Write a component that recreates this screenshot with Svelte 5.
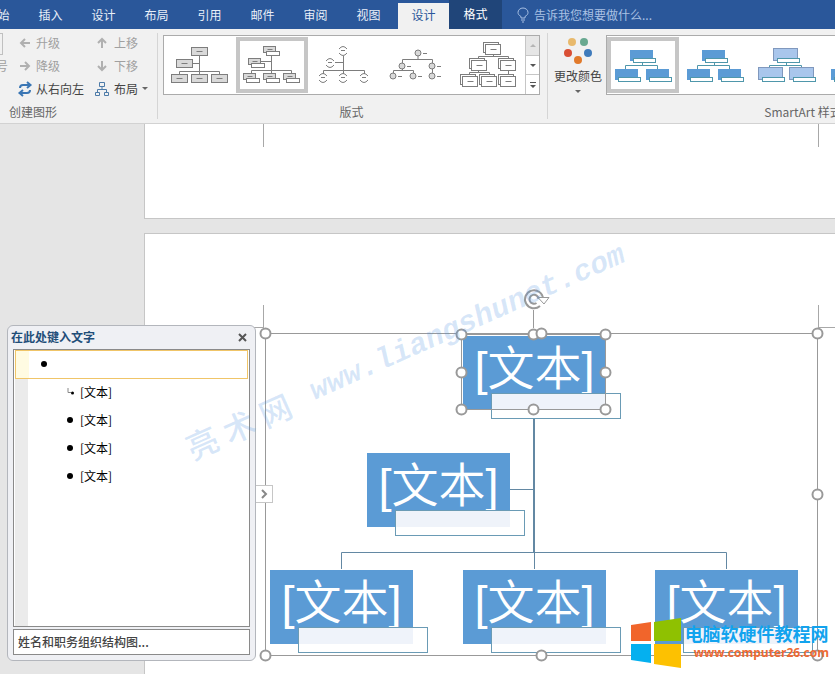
<script>
	const tabs = ['开始', '插入', '设计', '布局', '引用', '邮件', '审阅', '视图'];
	const layouts = ['org', 'titled', 'circle', 'dots', 'stack'];
	const styles = ['plain', 'plain', 'soft', 'plain'];

	let activeTool = '设计';
	let layout = 'titled';
	let style = 0;
	let paneOpen = true;

	// positions inside the SmartArt frame
	const nodes = [
		{ x: 197, y: 2 },
		{ x: 101, y: 119 },
		{ x: 4, y: 236 },
		{ x: 197, y: 236 },
		{ x: 389, y: 236 }
	];
	const frameHandles = [
		[0, 0],
		[276, 0],
		[552, 0],
		[552, 161],
		[0, 322],
		[276, 322],
		[552, 322]
	];
	const nodeHandles = [
		[196, 1],
		[268, 1],
		[340, 1],
		[196, 39],
		[340, 39],
		[196, 76],
		[268, 76],
		[340, 76]
	];
	const items = ['[文本]', '[文本]', '[文本]', '[文本]'];
</script>

<div class="app">
	<nav class="tabs">
		{#each tabs as tab}
			<button type="button" class="tab">{tab}</button>
		{/each}
		<div class="tool-tabs">
			{#each ['设计', '格式'] as tab}
				<button
					type="button"
					class="tab tool"
					class:active={activeTool == tab}
					on:click={() => (activeTool = tab)}>{tab}</button
				>
			{/each}
		</div>
		<button type="button" class="tell-me">
			<svg width="12" height="16" viewBox="0 0 12 16">
				<path d="M4 11V9.5C2 8.5 1 7 1 5.5a5 4.5 0 0 1 10 0C11 7 10 8.5 8 9.5V11zM4 13h4M5 15h2" />
			</svg>
			<span>告诉我您想要做什么...</span>
		</button>
	</nav>

	<div class="ribbon">
		<section class="group create">
			<div class="group-body">
				<div class="cut">
					<span class="cut-box"></span>
					<span class="cut-text">符号</span>
				</div>
				<div class="commands">
					<button type="button" class="command" disabled>
						<svg class="arrow" width="14" height="14"><path d="M12 7H3M7 3L3 7l4 4" /></svg>升级
					</button>
					<button type="button" class="command" disabled>
						<svg class="arrow" width="14" height="14"><path d="M2 7h9M7 3l4 4-4 4" /></svg>降级
					</button>
					<button type="button" class="command">
						<svg class="swap" width="16" height="16">
							<path d="M3 7q0-3 3-3h7M10 1l3.5 3L10 7M13 9q0 3-3 3H3M6 9l-3.5 3L6 15" />
						</svg>从右向左
					</button>
				</div>
				<div class="commands">
					<button type="button" class="command" disabled>
						<svg class="arrow" width="16" height="14"><path d="M8 12V3M4 7l4-4 4 4" /></svg>上移
					</button>
					<button type="button" class="command" disabled>
						<svg class="arrow" width="16" height="14"><path d="M8 2v9M4 7l4 4 4-4" /></svg>下移
					</button>
					<button type="button" class="command">
						<svg class="tree" width="16" height="16">
							<path
								d="M5.5 1.5h5v4h-5zM8 5.5V8M3.5 11V8.5h9V11M1.5 11.5h4v3h-4zM10.5 11.5h4v3h-4z"
							/>
						</svg>布局
						<svg class="caret" width="6" height="4"><path d="M0 0h6L3 3z" /></svg>
					</button>
				</div>
			</div>
			<h2>创建图形</h2>
		</section>

		<section class="group layouts">
			<div class="gallery">
				{#each layouts as name}
					<button
						type="button"
						class="thumb"
						class:selected={layout == name}
						aria-label={name}
						on:click={() => (layout = name)}
					>
						<svg class="wire" width="72" height="56">
							{#if name == 'org'}
								<path d="M35.5 18V37M28 26.5h7M15.5 37v-2.5h40V37" />
								{#each [[27.5, 10.5], [12.5, 22.5], [7.5, 37.5], [27.5, 37.5], [47.5, 37.5]] as [x, y]}
									<rect class="fill" {x} {y} width="16" height="8" />
									<path d="M{x + 5} {y + 4}h6" />
								{/each}
							{:else if name == 'titled'}
								<path d="M35.5 15V37M24 24.5h11M15.5 37v-3.5h40V37" />
								{#each [[27.5, 9.5], [12.5, 21.5], [7.5, 36.5], [27.5, 36.5], [47.5, 36.5]] as [x, y]}
									<rect class="fill" {x} {y} width="12" height="6" />
									<path d="M{x + 4} {y + 3}h5" />
									<rect class="blank" x={x + 3} y={y + 5} width="13" height="4" />
								{/each}
							{:else if name == 'circle'}
								<path d="M35.5 19V37M27 25.5h8M15.5 37v-3.5h41V37" />
								{#each [[35, 14], [22, 26], [15, 41], [35, 41], [56, 41]] as [x, y]}
									<path
										d="M{x - 4} {y - 2}q4 -5 8 0M{x - 4} {y + 2}q4 5 8 0M{x - 2} {y - 0.5}h4"
									/>
								{/each}
							{:else if name == 'dots'}
								<path d="M38 16v6.5M22.5 29v-6.5h30V39M22.5 29v4.5M13.5 39v-5.5h20V39" />
								{#each [[38, 16], [22, 29], [52, 29], [13, 39], [33, 39], [52, 39]] as [x, y]}
									<circle class="fill" cx={x} cy={y} r="3" />
									<path d="M{x + 5} {y + 0.5}h4" />
								{/each}
							{:else}
								<path
									d="M41.5 17v3M26.5 23v-3.5h30V23M26.5 34v2M17.5 38v-2.5h20V38M56.5 34v4"
								/>
								{#each [[33.5, 7.5], [19.5, 23.5], [48.5, 23.5], [10.5, 39.5], [29.5, 39.5], [48.5, 39.5]] as [x, y]}
									<rect class="blank" x={x - 2} y={y - 2} width="15" height="10" />
									<rect class="blank" {x} {y} width="15" height="10" />
									<path d="M{x + 5} {y + 5}h6" />
								{/each}
							{/if}
						</svg>
					</button>
				{/each}
				<div class="scroll">
					<button type="button" aria-label="上一行" disabled>
						<svg width="6" height="3"><path d="M0 3h6L3 0z" /></svg>
					</button>
					<button type="button" aria-label="下一行">
						<svg width="6" height="3"><path d="M0 0h6L3 3z" /></svg>
					</button>
					<button type="button" aria-label="更多">
						<svg width="6" height="6"><path d="M0 0h6v1H0zM0 3h6L3 6z" /></svg>
					</button>
				</div>
			</div>
			<h2>版式</h2>
		</section>

		<section class="group styles">
			<div class="group-body">
				<button type="button" class="colors">
					<svg width="32" height="30">
						<circle cx="10" cy="7" r="4" fill="#e8b96c" />
						<circle cx="22" cy="7" r="4" fill="#68a890" />
						<circle cx="6" cy="18" r="4" fill="#d94f35" />
						<circle cx="26" cy="18" r="4" fill="#3f7bbb" />
						<circle cx="16" cy="25" r="4" fill="#e17a2b" />
					</svg>
					更改颜色
					<svg class="caret" width="6" height="4"><path d="M0 0h6L3 3z" /></svg>
				</button>
				<div class="gallery wide">
					{#each styles as look, i}
						<button
							type="button"
							class="thumb"
							class:selected={style == i}
							aria-label="样式 {i + 1}"
							on:click={() => (style = i)}
						>
							<svg class="blue {look}" width="72" height="56">
								<path d="M35.5 25v3.5M18.5 32v-3.5h32V32" />
								{#each [[23, 13], [8, 32], [39, 32]] as [x, y]}
									{#if look == 'soft'}
										<rect x={x - 0.5} y={y - 1.5} width="24" height="12" />
									{:else}
										<rect {x} {y} width="23" height="11" />
									{/if}
									<rect class="blank" x={x + 3.5} y={y + 8.5} width="22" height="4" />
								{/each}
							</svg>
						</button>
					{/each}
				</div>
			</div>
			<h2>SmartArt 样式</h2>
		</section>
	</div>

	<main>
		<div class="page first">
			<div class="marks"><i></i><i></i></div>
		</div>
		<div class="page second">
			<div class="marks"><i></i><i></i></div>
			<div class="smartart">
				<svg class="lines" width="554" height="324">
					<path class="trunk" d="M269 85v134" />
					<path d="M245 156.5h24M76.5 236v-16.5h385V236M269.5 219v17" />
				</svg>
				{#each nodes as node}
					<div class="node" style="left: {node.x}px; top: {node.y}px">
						<span>[文本]</span>
						<div class="caption"></div>
					</div>
				{/each}
				<svg class="selection" width="554" height="324">
					<path d="M268.5 -23V-5" />
					<path class="gap" d="M198 2.5h142M197.5 3v72" />
					<path class="top" d="M196 1h145" />
					<path d="M196.5 1v75.5h144V1" />
					{#each [...nodeHandles, ...frameHandles] as [cx, cy]}
						<circle cx={cx + 0.5} cy={cy + 0.5} r="5" />
					{/each}
					<g class="rotate">
						<path class="outer" d="M278 -34a9 9 0 1 0 -3 7" />
						<path class="outer" d="M273.500 -34a4.500 4.500 0 1 0 -2 4" />
						<path class="head" d="M273 -35.500h11l-5 6.500z" />
					</g>
				</svg>
			</div>
		</div>

		{#if paneOpen}
			<aside class="pane">
				<header>
					<h3>在此处键入文字</h3>
					<button type="button" aria-label="关闭" on:click={() => (paneOpen = false)}>
						<svg width="12" height="10"><path d="M1 1l7 7M8 1L1 8" /></svg>
					</button>
				</header>
				<ul>
					<li class="current"><i class="dot"></i></li>
					{#each items as item, i}
						<li>
							{#if i == 0}
								<svg width="8" height="8">
									<path d="M1 0v4.5h3" />
									<circle cx="5.5" cy="5" r="1.5" />
								</svg>
							{:else}
								<i class="dot"></i>
							{/if}
							<span>{item}</span>
						</li>
					{/each}
				</ul>
				<footer>姓名和职务组织结构图...</footer>
			</aside>
		{/if}
		<button
			type="button"
			class="pane-toggle"
			aria-label="文本窗格"
			on:click={() => (paneOpen = !paneOpen)}
		>
			<svg width="8" height="10"><path d="M2 1l4 4-4 4" /></svg>
		</button>

		<div class="watermark">
			<span class="brush">亮</span><span class="brush">术</span><span class="brush">网</span>
			<span class="address">www.liangshunet.com</span>
		</div>
	</main>

	<div class="badge">
		<svg width="51" height="50">
			<path fill="#f1652b" d="M0 7l20 -3v19H0z" />
			<path fill="#8fc101" d="M23 4L50 0v23H23z" />
			<path fill="#05b0ef" d="M0 26h20v19L0 42z" />
			<path fill="#fdc101" d="M23 26h27v24l-27 -4z" />
		</svg>
		<div>
			<strong>电脑软硬件教程网</strong>
			<a href="http://www.computer26.com">www.computer26.com</a>
		</div>
	</div>
</div>

<style>
	:global(body) {
		margin: 0;
	}
	.app {
		position: relative;
		display: flex;
		flex-direction: column;
		height: 100vh;
		overflow: hidden;
		background: #e5e5e5;
		color: #444;
		font-family: 'Noto Sans CJK SC', sans-serif;
		font-size: 12px;
		line-height: 16px;
	}
	button {
		margin: 0;
		padding: 0;
		border: none;
		background: none;
		color: inherit;
		font: inherit;
	}
	svg {
		display: block;
		flex: none;
		fill: none;
	}
	h2,
	h3 {
		margin: 0;
		font-size: 12px;
		font-weight: normal;
	}

	.tabs {
		display: flex;
		flex: none;
		height: 29px;
		margin-left: -29px;
		background: #2a579a;
		color: #e9eff8;
	}
	.tab {
		flex: none;
		width: 53px;
	}
	.tool-tabs {
		display: flex;
		margin-left: 3px;
		background: #204579;
	}
	.tool {
		padding-bottom: 1px;
		color: #fff;
	}
	.tool.active {
		width: 51px;
		border-top: 3px solid #2a579a;
		padding-bottom: 3px;
		background: #f1f1f1;
		color: #2a579a;
	}
	.tell-me {
		display: flex;
		align-items: center;
		gap: 5px;
		margin-left: 15px;
		color: #a9c1e4;
		white-space: nowrap;
	}
	.tell-me path {
		stroke: #a9c1e4;
	}

	.ribbon {
		display: flex;
		flex: none;
		height: 94px;
		border-bottom: 1px solid #d2d2d2;
		background: #f1f1f1;
	}
	.group {
		display: flex;
		flex: none;
		flex-direction: column;
		justify-content: space-between;
		box-sizing: border-box;
		padding: 6px 0 3px;
		background: linear-gradient(#d5d5d5, #d5d5d5) right 4px / 1px 86px no-repeat;
	}
	.group-body {
		display: flex;
	}
	.group h2 {
		color: #666;
		text-align: center;
		white-space: nowrap;
	}
	.create {
		width: 158px;
	}
	.create h2 {
		padding-left: 9px;
		text-align: left;
	}
	.cut {
		display: flex;
		flex-direction: column;
		align-items: flex-end;
		gap: 3px;
		width: 8px;
		margin-top: -2px;
		overflow: hidden;
		color: #a0a0a0;
		white-space: nowrap;
	}
	.cut-box {
		width: 20px;
		height: 20px;
		margin-right: 5px;
		border: 1px solid #c0c0c0;
	}
	.commands {
		display: flex;
		flex-direction: column;
		margin: -4px 0 0 10px;
	}
	.command {
		display: flex;
		align-items: center;
		gap: 4px;
		height: 23px;
	}
	.command:disabled {
		color: #a0a0a0;
	}
	.arrow path {
		stroke: #b0b0b0;
		stroke-width: 2;
	}
	.swap {
		margin: 0 -1px;
	}
	.swap path {
		stroke: #3a76b4;
		stroke-width: 2;
	}
	.tree path {
		stroke: #4d7ba8;
	}
	.caret path {
		fill: #666;
	}

	.layouts {
		width: 390px;
		padding-right: 8px;
		padding-left: 5px;
	}
	.gallery {
		display: flex;
		height: 58px;
		border: 1px solid #ababab;
		background: #fff;
	}
	.wide {
		flex: 1;
		border-right: none;
	}
	.thumb {
		display: flex;
		flex: none;
		align-self: center;
		width: 72px;
		height: 56px;
	}
	.thumb.selected {
		box-shadow: inset 0 0 0 4px #c6c6c6;
	}
	.wire path,
	.wire rect,
	.wire circle {
		stroke: #7d7d7d;
	}
	.wire .fill {
		fill: #d9d9d9;
	}
	.blank {
		fill: #fff;
	}
	.blue path,
	.blue .blank {
		stroke: #4f97ab;
	}
	.plain rect:not(.blank) {
		fill: #5b9bd5;
	}
	.soft rect:not(.blank) {
		fill: #a9c6ec;
		stroke: #8098bd;
	}
	.scroll {
		display: flex;
		flex-direction: column;
		width: 14px;
		margin-left: auto;
	}
	.scroll button {
		display: flex;
		flex: 1;
		align-items: center;
		justify-content: center;
		border-left: 1px solid #c6c6c6;
	}
	.scroll button + button {
		border-top: 1px solid #c6c6c6;
	}
	.scroll path {
		fill: #555;
	}
	.scroll button:disabled {
		background: #e6e6e6;
	}
	.scroll button:disabled path {
		fill: #b5b5b5;
	}
	.styles {
		width: 510px;
	}
	.colors {
		display: flex;
		flex-direction: column;
		align-items: center;
		gap: 3px;
		width: 58px;
		padding-left: 2px;
		box-sizing: border-box;
	}
	.colors .caret {
		margin-top: 3px;
	}

	main {
		position: relative;
		display: flex;
		flex: 1;
		flex-direction: column;
		gap: 14px;
		min-height: 0;
		padding-left: 144px;
	}
	.page {
		box-sizing: border-box;
		border: 1px solid #c6c6c6;
		border-right: none;
		background: #fff;
	}
	.page.first {
		flex: none;
		height: 95px;
		border-top: none;
	}
	.page.second {
		flex: 1;
		padding-top: 71px;
		border-bottom: none;
	}
	/* text area corners */
	.marks {
		display: flex;
		justify-content: space-between;
		width: 602px;
		height: 23px;
		margin-left: 95px;
	}
	.marks i {
		width: 23px;
		border: 0 solid #a8a8a8;
		border-right-width: 1px;
	}
	.marks i + i {
		border-right-width: 0;
		border-left-width: 1px;
	}
	.second .marks i {
		border-bottom-width: 1px;
	}
	.smartart {
		position: relative;
		width: 551px;
		height: 321px;
		margin: 5px 0 0 120px;
		border: 1px solid #999;
	}
	.lines,
	.selection {
		position: absolute;
		top: -1px;
		left: -1px;
		overflow: visible;
	}
	.lines path {
		stroke: #6388a3;
	}
	.lines .trunk {
		stroke-width: 2;
	}
	.selection path,
	.selection circle {
		stroke: #999;
	}
	.selection circle {
		fill: #fff;
		stroke-width: 2;
	}
	.selection .top {
		stroke-width: 2;
	}
	.selection .gap {
		stroke: #fff;
	}
	.rotate .outer {
		stroke-width: 2;
	}
	.rotate .head {
		fill: #fff;
	}
	.node {
		position: absolute;
		width: 143px;
		height: 74px;
		background: #5b9bd5;
		color: #fff;
		font-family: 'Liberation Sans', 'Noto Sans CJK SC', sans-serif;
		font-size: 47px;
		font-weight: 350;
		line-height: 66px;
		text-align: center;
	}
	.caption {
		position: absolute;
		top: 57px;
		left: 28px;
		width: 130px;
		height: 26px;
		border: 1px solid #6a9bb5;
		background: linear-gradient(#eff3fa, #eff3fa) 0 0 / 114px 16px no-repeat #fff;
		box-sizing: border-box;
	}

	.pane {
		position: absolute;
		top: 201px;
		left: 7px;
		display: flex;
		flex-direction: column;
		box-sizing: border-box;
		width: 249px;
		height: 336px;
		padding: 0 5px 5px;
		border: 1px solid #b3b6bc;
		border-radius: 6px;
		background: #eff0f4;
	}
	.pane header {
		display: flex;
		align-items: center;
		justify-content: space-between;
		height: 23px;
	}
	.pane h3 {
		margin-left: -2px;
		padding-bottom: 2px;
		color: #1f4e79;
		font-weight: bold;
	}
	.pane header path {
		stroke: #555;
		stroke-width: 2;
	}
	.pane ul {
		flex: 1;
		margin: 0 0 2px;
		padding: 0 1px;
		border: 1px solid #8a8a8a;
		background: linear-gradient(#ebebeb, #ebebeb) 1px 0 / 13px 100% no-repeat #fff;
		list-style: none;
	}
	.pane li {
		display: flex;
		align-items: center;
		gap: 6px;
		box-sizing: border-box;
		height: 28px;
		padding: 0 0 2px 52px;
		color: #000;
	}
	.pane .current {
		height: 29px;
		padding-left: 25px;
		border: 1px solid #f0c568;
		background: linear-gradient(90deg, #fffbe2 13px, #fff 13px);
	}
	.dot {
		width: 6px;
		height: 6px;
		margin-right: 1px;
		border-radius: 50%;
		background: #000;
	}
	.pane li svg {
		margin-right: -1px;
	}
	.pane li path {
		stroke: #888;
	}
	.pane li circle {
		fill: #000;
	}
	.pane footer {
		padding: 4px;
		border: 1px solid #8a8a8a;
		background: #fff;
		font-weight: 500;
	}
	.pane-toggle {
		position: absolute;
		top: 361px;
		left: 256px;
		display: flex;
		align-items: center;
		justify-content: center;
		width: 17px;
		height: 18px;
		border: 1px solid #c6c6c6;
		border-left: none;
		background: #fff;
	}
	.pane-toggle path {
		stroke: #888;
		stroke-width: 2;
	}

	.watermark {
		position: absolute;
		top: 306px;
		left: 187px;
		display: flex;
		align-items: center;
		gap: 8px;
		color: rgba(74, 144, 226, 0.22);
		line-height: 36px;
		transform: rotate(-24deg);
		transform-origin: 0 50%;
		white-space: nowrap;
		pointer-events: none;
	}
	.brush {
		font-size: 32px;
		font-weight: 500;
	}
	.address {
		margin-left: 16px;
		font-family: 'Liberation Mono', monospace;
		font-size: 30px;
		font-style: italic;
		font-weight: bold;
	}

	.badge {
		position: absolute;
		right: 6px;
		bottom: 6px;
		display: flex;
		gap: 3px;
		color: #12a3ee;
	}
	.badge div {
		display: flex;
		flex-direction: column;
		gap: 2px;
		padding-top: 5px;
	}
	.badge strong {
		font-size: 18px;
		line-height: 20px;
	}
	.badge a {
		padding-left: 9px;
		color: #ee6a33;
		font-family: 'Open Sans', sans-serif;
		font-size: 12px;
		font-weight: bold;
		text-decoration: none;
	}
</style>
